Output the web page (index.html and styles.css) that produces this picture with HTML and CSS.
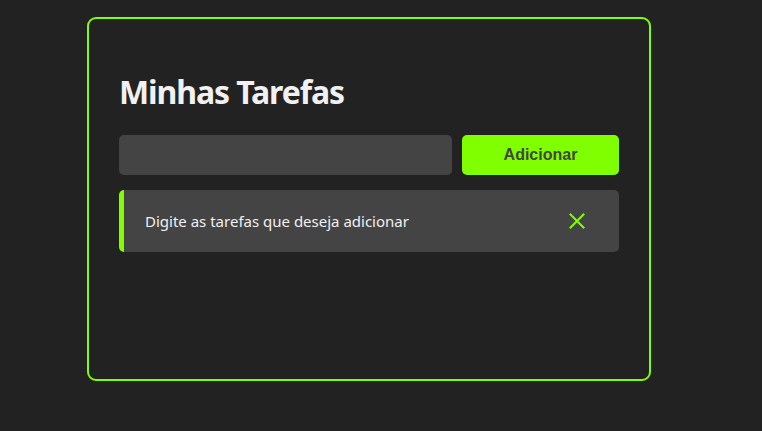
FILE: index.html
```html
<!DOCTYPE html>
<html lang="pt-BR">
<head>
<meta charset="utf-8">
<title>Minhas Tarefas</title>
<link rel="stylesheet" href="styles.css">
</head>
<body>
<main class="card">
  <h1 class="title">Minhas Tarefas</h1>
  <form class="add-row" onsubmit="return false">
    <input class="task-input" type="text" aria-label="Nova tarefa">
    <button class="add-btn" type="submit">Adicionar</button>
  </form>
  <ul class="task-list">
    <li class="task">
      <span class="task-text">Digite as tarefas que deseja adicionar</span>
      <button class="remove-btn" type="button" aria-label="Remover">
        <svg width="16" height="16" viewBox="0 0 16 16" aria-hidden="true">
          <path d="M1.5 1.5 L14.5 14.5 M14.5 1.5 L1.5 14.5" stroke="#7fff00" stroke-width="2" fill="none" stroke-linecap="square"/>
        </svg>
      </button>
    </li>
  </ul>
</main>
</body>
</html>
```

FILE: styles.css
```css
* { box-sizing: border-box; }

html, body {
  margin: 0;
  background: #222222;
}

body {
  font-family: "Noto Sans", "Open Sans", sans-serif;
  color: #eeeeee;
  padding: 17px 0 0 87px;
  height: 431px;
}

.card {
  width: 564px;
  min-height: 364px;
  border: 2px solid #7fff00;
  border-radius: 9px;
  padding: 30px;
}

.title {
  margin: 21.5px 0;
  font-size: 32px;
  line-height: 42.5px;
  font-weight: 700;
  color: #f1f1f1;
  letter-spacing: -1.1px;
}

.add-row {
  display: flex;
  gap: 10px;
  margin: 0;
}

.task-input {
  flex: 1;
  height: 40px;
  border: none;
  border-radius: 5px;
  background: #444444;
  color: #eeeeee;
  padding: 0 12px;
  font: inherit;
  outline: none;
}

.add-btn {
  height: 40px;
  width: 157px;
  border: none;
  border-radius: 5px;
  background: #7fff00;
  color: #444444;
  font-family: "Liberation Sans", Arial, sans-serif;
  font-weight: 700;
  font-size: 16px;
  padding: 0;
}

.task-list {
  list-style: none;
  margin: 15px 0 0;
  padding: 0;
}

.task {
  display: flex;
  align-items: center;
  justify-content: space-between;
  background: #444444;
  border-left: 5px solid #7fff00;
  border-radius: 5px;
  padding: 20px 34px 20px 21px;
  min-height: 62px;
}

.task-text {
  font-size: 15px;
  line-height: 22px;
  color: #f0f0f0;
}

.remove-btn {
  display: flex;
  background: none;
  border: none;
  padding: 0;
  width: 16px;
  height: 16px;
}
```
